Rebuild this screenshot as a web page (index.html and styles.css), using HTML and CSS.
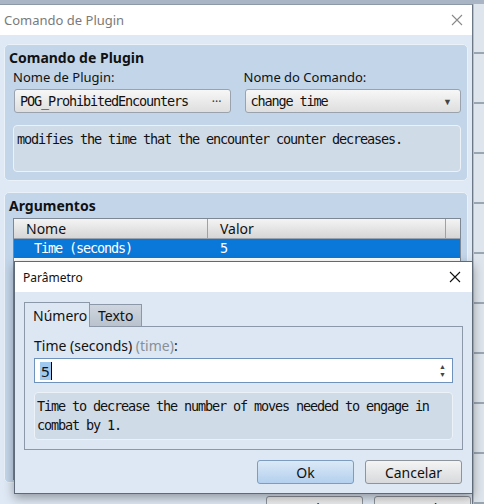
FILE: index.html
```html
<!DOCTYPE html>
<html lang="pt">
<head>
<meta charset="utf-8">
<title>Comando de Plugin</title>
<link rel="stylesheet" href="styles.css">
</head>
<body>
<div class="screen">
  <div class="window">
    <div class="titlebar">
      <span class="title">Comando de Plugin</span>
      <span class="close light">
        <svg width="12" height="12" viewBox="0 0 12 12"><path d="M1 1 L11 11 M11 1 L1 11" stroke="#8a8a8a" stroke-width="1.1"/></svg>
      </span>
    </div>
    <div class="win-body">
      <section class="group g1">
        <h2 class="group-title">Comando de Plugin</h2>
        <div class="fields">
          <div class="field">
            <label class="lbl">Nome de Plugin:</label>
            <div class="combo"><span class="mono">POG_ProhibitedEncounters</span><span class="dots">···</span></div>
          </div>
          <div class="field">
            <label class="lbl">Nome do Comando:</label>
            <div class="combo"><span class="mono">change time</span><span class="arrow">▼</span></div>
          </div>
        </div>
        <div class="desc mono">modifies the time that the encounter counter decreases.</div>
      </section>
      <section class="group g2">
        <h2 class="group-title">Argumentos</h2>
        <div class="table">
          <div class="thead">
            <div class="th c1">Nome</div>
            <div class="th c2">Valor</div>
            <div class="th c3"></div>
          </div>
          <div class="row sel mono">
            <div class="td c1">Time (seconds)</div>
            <div class="td c2">5</div>
          </div>
          <div class="tbody-rest"></div>
        </div>
      </section>
      <div class="win-buttons">
        <div class="btn gray">Ok</div>
        <div class="btn gray">Cancelar</div>
      </div>
    </div>
  </div>
  <div class="side-strip"></div>

  <div class="dialog">
    <div class="dlg-titlebar">
      <span class="dlg-title">Parâmetro</span>
      <span class="close">
        <svg width="12" height="12" viewBox="0 0 12 12"><path d="M1 1 L11 11 M11 1 L1 11" stroke="#111" stroke-width="1.1"/></svg>
      </span>
    </div>
    <div class="dlg-body">
      <div class="tabs">
        <div class="tab active">Número</div>
        <div class="tab">Texto</div>
      </div>
      <div class="panel">
        <div class="plabel">Time (seconds) <span class="muted">(time)</span>:</div>
        <div class="input">
          <span class="val"><span class="selected">5</span><span class="caret"></span></span>
          <span class="spin"><span>▲</span><span>▼</span></span>
        </div>
        <div class="pdesc mono">Time to decrease the number of moves needed to engage in<br>combat by 1.</div>
      </div>
      <div class="dlg-buttons">
        <div class="btn blue">Ok</div>
        <div class="btn gray">Cancelar</div>
      </div>
    </div>
  </div>
</div>
</body>
</html>
```
FILE: styles.css
```css
* { box-sizing: border-box; }
html, body { margin: 0; padding: 0; }
body {
  width: 484px; height: 504px; overflow: hidden;
  font-family: "Noto Sans", "Open Sans", sans-serif;
  font-size: 13px; color: #111;
  background: #a9b5c4;
}
.mono {
  font-family: "DejaVu Sans Mono", monospace;
  font-size: 13.5px;
  letter-spacing: -1.13px;
}
.screen {
  position: relative;
  width: 484px; height: 504px;
  display: flex;
  padding-top: 4px;
}
.window {
  width: 473px;
  height: 500px;
  flex-shrink: 0;
  overflow: hidden;
  border-top: 1px solid #8d99a7;
  border-right: 1px solid #6d7887;
  background: #dfe9f5;
  display: flex; flex-direction: column;
}
.side-strip {
  flex: 1;
  border-left: 1px solid #b5bfcb;
  background-image: repeating-linear-gradient(#dfe5ec 0 48px, #9aa5b2 48px 50px);
}
.titlebar {
  height: 30px;
  flex-shrink: 0;
  background: #fff;
  display: flex; align-items: center; justify-content: space-between;
  padding: 0 8px 0 4px;
}
.title { color: #7a7a7a; font-size: 13px; }
.close { display: flex; width: 14px; justify-content: center; }
.win-body {
  flex-shrink: 0;
  padding: 9px 4px 0 4px;
  display: flex; flex-direction: column;
}
.group {
  flex-shrink: 0;
  background: #c3d5e9;
  border: 1px solid #eaf1f8;
  border-radius: 5px;
  padding: 3px 6px 0 8px;
}
.g1 { height: 137px; }
.g2 { height: 291px; margin-top: 11px; }
.group-title {
  margin: 0; font-size: 14px; font-weight: 700;
  margin-left: -4px;
  line-height: 19px;
}
.fields { display: flex; gap: 13px; margin-top: 1px; }
.field { flex: 1; display: flex; flex-direction: column; }
.lbl { line-height: 18px; }
.combo {
  margin-top: 3px;
  height: 24px;
  margin-left: 1px;
  border: 1px solid #9aa3ad;
  border-radius: 3px;
  background: linear-gradient(#f7f7f7, #dedede);
  display: flex; align-items: center; justify-content: space-between;
  padding: 0 8px 0 5px;
  color: #111;
}
.dots { font-size: 12px; letter-spacing: 0; color: #333; }
.arrow { font-size: 9px; color: #444; }
.desc {
  margin-top: 12px;
  height: 47px;
  background: #d0dbe8;
  border: 1px solid #ecf2f8;
  border-radius: 4px;
  padding: 4px 3px;
  line-height: 18px;
}
.table {
  margin-top: 3px;
  border: 1px solid #7e8894;
  background: #fff;
  height: 262px;
  display: flex; flex-direction: column;
}
.thead {
  display: flex; height: 20px;
  background: linear-gradient(#f4f4f4, #d6d6d6);
  border-bottom: 1px solid #9aa3ad;
}
.th { line-height: 19px; border-right: 1px solid #9aa3ad; font-size: 14px; }
.th.c1 { width: 194px; padding-left: 12px; }
.th.c2 { width: 238px; padding-left: 12px; }
.th.c3 { flex: 1; border-right: 0; }
.row { display: flex; height: 19px; line-height: 19px; }
.row.sel { background: #0a78d8; color: #fff; }
.td.c1 { width: 194px; padding-left: 20px; }
.td.c2 { padding-left: 12px; }
.tbody-rest { flex: 1; }
.win-buttons {
  display: flex; justify-content: flex-end; gap: 11px;
  margin-top: 13px; margin-right: -3px;
}
.btn {
  width: 97px; height: 24px;
  flex-shrink: 0;
  border-radius: 3px;
  display: flex; align-items: center; justify-content: center;
  font-size: 14px;
}
.btn.gray {
  border: 1px solid #8e949b;
  background: linear-gradient(#f4f4f4, #d7d9dc);
}
.btn.blue {
  border: 1px solid #7d9cc0;
  background: linear-gradient(#dbe9f7, #b3d0ee);
}

/* modal dialog overlaid on the window */
.dialog {
  position: absolute;
  left: 14px; top: 261px;
  width: 459px; height: 233px;
  border: 1px solid #5e6a78;
  background: #dde8f4;
  box-shadow: 0 4px 10px rgba(0,0,0,0.35);
  display: flex; flex-direction: column;
}
.dlg-titlebar {
  height: 30px; flex-shrink: 0; background: #fff;
  display: flex; align-items: center; justify-content: space-between;
  padding: 0 10px 0 8px;
}
.dlg-title { font-size: 12px; color: #111; }
.dlg-body {
  flex: 1;
  padding: 10px 9px 0 9px;
  display: flex; flex-direction: column;
}
.tabs { display: flex; height: 24px; align-items: flex-end; flex-shrink: 0; }
.tab {
  height: 22px; padding: 0 8px;
  border: 1px solid #8c98a7; border-bottom: 0;
  background: linear-gradient(#cfd6df, #b9c2cd);
  line-height: 21px;
  margin-left: -1px;
  font-size: 14px;
}
.tab.active {
  height: 25px; margin-left: 0; width: 66px;
  background: #dce7f3;
  position: relative; top: 1px;
  line-height: 26px;
  z-index: 1;
}
.panel {
  height: 124px; flex-shrink: 0;
  border: 1px solid #8c98a7;
  background: #dce7f3;
  padding: 10px 9px 0 9px;
  display: flex; flex-direction: column;
}
.plabel { line-height: 18px; font-size: 14px; }
.muted { color: #8a8f96; }
.input {
  margin-top: 3px;
  height: 25px; flex-shrink: 0;
  border: 1px solid #6f92bd;
  background: #fff;
  display: flex; align-items: center; justify-content: space-between;
  padding: 0 6px 0 5px;
}
.val { display: flex; align-items: center; font-size: 15px; }
.selected { background: #9fc9ee; padding: 0 1px; line-height: 18px; }
.caret { width: 1px; height: 18px; background: #000; }
.spin { display: flex; flex-direction: column; font-size: 7px; line-height: 8px; color: #444; }
.pdesc {
  margin-top: 9px;
  height: 48px; flex-shrink: 0;
  background: #d0dbe8;
  border: 1px solid #ecf2f8;
  border-radius: 4px;
  padding: 4px 2px;
  line-height: 19px;
}
.dlg-buttons {
  display: flex; justify-content: flex-end; gap: 11px;
  margin-top: 10px; padding-right: 1px;
}
```
